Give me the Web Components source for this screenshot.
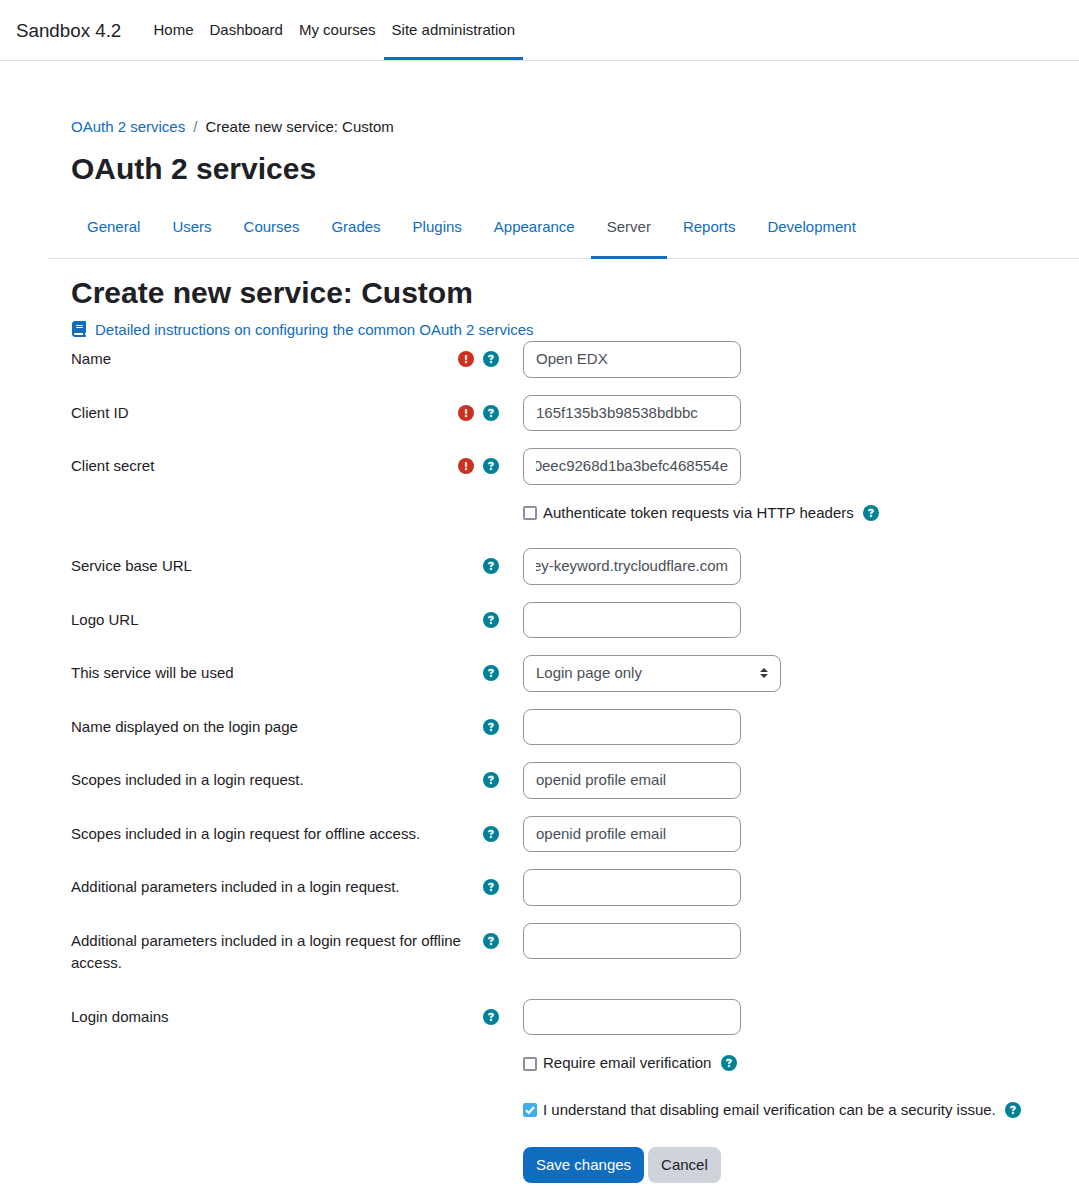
<!DOCTYPE html>
<html lang="en">
<head>
<meta charset="utf-8">
<title>OAuth 2 services</title>
<style>
body{margin:0;background:#fff;color:#1d2125;font:15px/22.5px "Liberation Sans",Arial,sans-serif;overflow:hidden}
</style>
</head>
<body>
<oauth-page></oauth-page>
<script>
const define = (name, render) => customElements.define(name, class extends HTMLElement {
  connectedCallback() {
    if (this.shadowRoot) return;
    this.attachShadow({mode: 'open'}).innerHTML = render(this);
  }
});

const disc = (fill, mark) => `<circle cx="256" cy="256" r="256" fill="${fill}"/><path fill="#fff" stroke="#fff" stroke-width="16" d="${mark}"/>`;
const glyphs = {
  help: [512, disc('#008196', 'M169.8 165.3c7.9-22.3 29.1-37.3 52.8-37.3h58.3c34.9 0 63.1 28.3 63.1 63.1c0 22.6-12.1 43.5-31.7 54.8L280 264.4c-.2 13-10.9 23.6-24 23.6c-13.3 0-24-10.7-24-24V250.5c0-8.6 4.6-16.5 12.1-20.8l44.3-25.4c4.7-2.7 7.6-7.7 7.6-13.1c0-8.4-6.8-15.1-15.1-15.1H222.6c-3.4 0-6.4 2.1-7.5 5.3l-.4 1.2c-4.4 12.5-18.2 19-30.6 14.6s-19-18.2-14.6-30.6l.4-1.2zM224 352a32 32 0 1 1 64 0 32 32 0 1 1 -64 0z')],
  required: [512, disc('#ca3120', 'M256 128c13.3 0 24 10.7 24 24V264c0 13.3-10.7 24-24 24s-24-10.7-24-24V152c0-13.3 10.7-24 24-24zM224 352a32 32 0 1 1 64 0 32 32 0 1 1 -64 0z')],
  book: [448, '<path fill="#0f6cbf" d="M96 0C43 0 0 43 0 96V416c0 53 43 96 96 96H384h32c17.7 0 32-14.3 32-32s-14.3-32-32-32V384c17.7 0 32-14.3 32-32V32c0-17.7-14.3-32-32-32H384 96zm0 384H352v64H96c-17.7 0-32-14.3-32-32s14.3-32 32-32zm32-240c0-8.8 7.2-16 16-16H336c8.8 0 16 7.2 16 16s-7.2 16-16 16H144c-8.8 0-16-7.2-16-16zm16 48H336c8.8 0 16 7.2 16 16s-7.2 16-16 16H144c-8.8 0-16-7.2-16-16s7.2-16 16-16z"/>']
};

define('ui-icon', el => {
  const [width, art] = glyphs[el.getAttribute('name')];
  return `<style>:host{display:block;flex:none;width:16px;height:16px}svg{display:block;margin:0 auto}</style>
  <svg width="${width / 32}" height="16" viewBox="0 0 ${width} 512">${art}</svg>`;
});

define('nav-item', el => `<style>
  :host{display:flex;align-items:center;box-sizing:border-box;height:60px;padding:3px 8px 0;border-bottom:3px solid transparent;white-space:nowrap}
  :host([active]){border-bottom-color:#0f6cbf}
</style><slot></slot>`);

define('site-header', () => `<style>
  :host{display:flex;height:60px;border-bottom:1px solid #dee2e6}
  .brand{font-size:18.75px;line-height:28px;margin:17px 24.2px 0 16px;white-space:nowrap}
</style><span class="brand">Sandbox 4.2</span>
<nav-item>Home</nav-item><nav-item>Dashboard</nav-item><nav-item>My courses</nav-item><nav-item active>Site administration</nav-item>`);

define('bread-crumb', () => `<style>
  :host{display:flex;gap:8px}a{color:#0f6cbf}i{font-style:normal;color:#6a737b}
</style><a>OAuth 2 services</a><i>/</i><span>Create new service: Custom</span>`);

define('tab-item', el => `<style>
  :host{display:block;box-sizing:border-box;height:63px;padding:20px 16px 0;color:#0f6cbf;border-bottom:3px solid transparent;white-space:nowrap}
  :host([active]){color:#495057;border-bottom-color:#0f6cbf}
</style><slot></slot>`);

define('tab-bar', () => `<style>
  :host{display:flex;box-sizing:border-box;height:63px;margin-left:-23px;padding-left:23px;box-shadow:inset 0 -1px #dee2e6}
</style>` + ['General', 'Users', 'Courses', 'Grades', 'Plugins', 'Appearance', 'Server', 'Reports', 'Development']
  .map(t => `<tab-item${t === 'Server' ? ' active' : ''}>${t}</tab-item>`).join(''));

define('text-field', () => `<style>
  :host{display:flex;align-items:center;box-sizing:border-box;width:218px;height:36.5px;padding:0 12px;border:1px solid #8f959e;border-radius:8px;color:#495057}
  .value{display:flex;flex:1;min-width:0;overflow:hidden;white-space:nowrap}
  :host([scrolled]) .value{justify-content:flex-end}
</style><span class="value"><span><slot></slot></span></span>`);

define('select-field', () => `<style>
  :host{display:flex;align-items:center;justify-content:space-between;box-sizing:border-box;width:258px;height:36.5px;padding:0 12px;border:1px solid #8f959e;border-radius:8px;color:#495057}
</style><slot></slot><svg width="8" height="10" viewBox="0 0 4 5"><path fill="#343a40" d="M2 0L0 2h4zm0 5L0 3h4z"/></svg>`);

define('form-row', el => `<style>
  :host{display:flex;align-items:flex-start;margin-bottom:17px}
  .label{display:flex;justify-content:space-between;width:428px;margin-right:24px;padding-top:7px}
  .icons{display:flex;gap:9px;padding-top:3px}
  .text{max-width:395px}
</style><div class="label"><span class="text">${el.getAttribute('label')}</span>
<span class="icons">${el.hasAttribute('required') ? '<ui-icon name="required"></ui-icon>' : ''}<ui-icon name="help"></ui-icon></span></div><slot></slot>`);

define('check-row', el => `<style>
  :host{display:flex;align-items:flex-start;height:22.5px;margin:0 0 24px 452px;white-space:nowrap}
  .box{box-sizing:border-box;width:14px;height:14px;margin:4.9px 6px 0 0;border:2px solid #8f8f9d;border-radius:2px;flex:none}
  .on{border:0;background:#3daee9}
  svg{display:block}
  ui-icon{margin:3px 0 0 9.2px}
</style><span class="box${el.hasAttribute('checked') ? ' on' : ''}">${el.hasAttribute('checked') ? '<svg width="14" height="14" viewBox="0 0 14 14"><path d="M3 7.2L5.8 10L11 4" fill="none" stroke="#fff" stroke-width="2.2"/></svg>' : ''}</span><slot></slot><ui-icon name="help"></ui-icon>`);

define('ui-button', () => `<style>
  :host{display:flex;align-items:center;box-sizing:border-box;height:36.5px;padding:0 13px;border-radius:8px;background:#ced4da;color:#1d2125}
  :host([primary]){background:#0f6cbf;color:#fff}
</style><slot></slot>`);

define('service-form', () => `<style>
  :host{display:block}.actions{display:flex;gap:4px;margin:25.5px 0 0 452px}
</style>
<form-row label="Name" required><text-field>Open EDX</text-field></form-row>
<form-row label="Client ID" required><text-field>165f135b3b98538bdbbc</text-field></form-row>
<form-row label="Client secret" required><text-field scrolled>0eec9268d1ba3befc468554e</text-field></form-row>
<check-row>Authenticate token requests via HTTP headers</check-row>
<form-row label="Service base URL"><text-field scrolled>ey-keyword.trycloudflare.com</text-field></form-row>
<form-row label="Logo URL"><text-field></text-field></form-row>
<form-row label="This service will be used"><select-field>Login page only</select-field></form-row>
<form-row label="Name displayed on the login page"><text-field></text-field></form-row>
<form-row label="Scopes included in a login request."><text-field>openid profile email</text-field></form-row>
<form-row label="Scopes included in a login request for offline access."><text-field>openid profile email</text-field></form-row>
<form-row label="Additional parameters included in a login request."><text-field></text-field></form-row>
<form-row label="Additional parameters included in a login request for offline access." style="margin-bottom:24px"><text-field></text-field></form-row>
<form-row label="Login domains"><text-field></text-field></form-row>
<check-row>Require email verification</check-row>
<check-row checked>I understand that disabling email verification can be a security issue.</check-row>
<div class="actions"><ui-button primary>Save changes</ui-button><ui-button>Cancel</ui-button></div>`);

define('oauth-page', () => `<style>
  :host{display:block}
  main{padding:55px 0 0 71px}
  h1,h2{margin:0;font-size:30px;line-height:36px;font-weight:700}
  h1{margin:12px 0 9px}
  h2{margin-top:16px}
  .docs{display:flex;gap:8px;color:#0f6cbf;margin:8px 0 0;height:22.5px}
  .docs ui-icon{margin-top:2px}
</style>
<site-header></site-header>
<main><bread-crumb></bread-crumb><h1>OAuth 2 services</h1><tab-bar></tab-bar>
<h2>Create new service: Custom</h2>
<div class="docs"><ui-icon name="book"></ui-icon><span>Detailed instructions on configuring the common OAuth 2 services</span></div>
<service-form></service-form></main>`);
</script>
</body>
</html>
